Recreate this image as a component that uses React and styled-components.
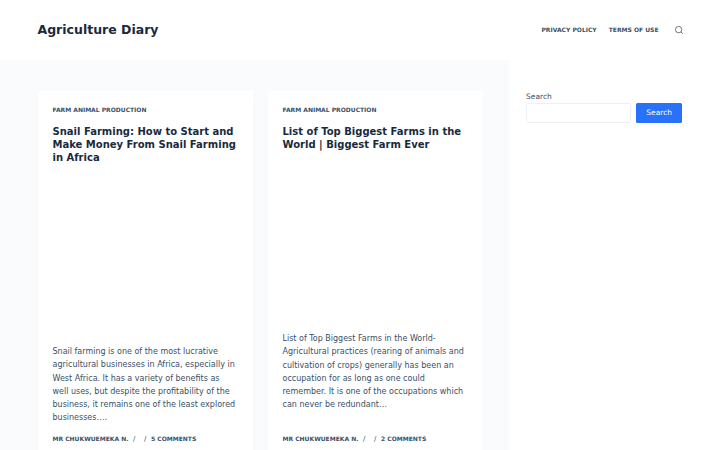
import React from 'react';
import styled, { createGlobalStyle } from 'styled-components';

const GlobalStyle = createGlobalStyle`
  * { box-sizing: border-box; }
  body {
    margin: 0;
    overflow: hidden;
    background: #fff;
    color: #3a4f66;
    font-family: "DejaVu Sans", sans-serif;
    font-size: 8px;
    line-height: 13.2px;
  }
  a { color: inherit; text-decoration: none; }
  h1, h2, p { margin: 0; }
`;

const Page = styled.div`
  width: 720px;
  height: 450px;
  overflow: hidden;
  display: flex;
  flex-direction: column;
`;

const Header = styled.header`
  flex: 0 0 60px;
  display: flex;
  align-items: center;
  justify-content: space-between;
  padding: 0 37.5px;
`;

const SiteTitle = styled.h1`
  color: #192a3d;
  font-size: 12.5px;
  line-height: 18px;
  font-weight: 700;
`;

const Nav = styled.nav`
  display: flex;
  align-items: center;
  gap: 12px;
  color: #3a4f66;
  font-size: 6px;
  line-height: 8px;
  font-weight: 700;
  text-transform: uppercase;
`;

const NavLink = styled.a`
  padding-bottom: 1px;
`;

const SearchIcon = styled.svg`
  width: 8px;
  height: 8px;
  margin-left: 4px;
`;

const Body = styled.div`
  flex: 1;
  min-height: 0;
  display: flex;
`;

const Main = styled.main`
  flex: 0 0 508.5px;
  padding: 31px 26px 0 37.5px;
  display: grid;
  grid-template-columns: 215px 215px;
  gap: 15px;
  background: #fafbfd;
`;

const Card = styled.article`
  height: 380px;
  padding: 15px;
  background: #fff;
  box-shadow: 0 6px 9px rgba(34, 56, 101, 0.02);
`;

const Category = styled.a`
  display: block;
  height: 8px;
  font-size: 6px;
  line-height: 7px;
  font-weight: 700;
  text-transform: uppercase;
`;

const Title = styled.h2`
  height: ${(p) => p.$height}px;
  margin-top: 11px;
  color: #192a3d;
  font-size: 10px;
  line-height: 13px;
  font-weight: 700;
  white-space: pre;
`;

const Excerpt = styled.p`
  height: 79.2px;
  white-space: pre;
`;

const Meta = styled.div`
  display: flex;
  margin-top: ${(p) => p.$gap}px;
  font-size: 6px;
  line-height: 8px;
  font-weight: 700;
  text-transform: uppercase;
  white-space: pre;
`;

const Author = styled.span`
  width: 80.5px;
`;

const Slash = styled.span`
  width: ${(p) => p.$width}px;
  font-size: 7px;
  font-weight: 400;
`;

const Sidebar = styled.aside`
  flex: 1;
  min-width: 0;
  padding: 30px 37.8px 0 17.5px;
`;

const Label = styled.label`
  display: block;
  font-size: 7.5px;
`;

const SearchRow = styled.form`
  display: flex;
  gap: 5px;
`;

const Input = styled.input`
  flex: 1;
  min-width: 0;
  height: 20px;
  border: 1px solid #eceff3;
  border-radius: 1.5px;
  background: #fff;
`;

const Button = styled.button`
  width: 46px;
  height: 20px;
  padding: 0;
  border: 0;
  border-radius: 1.5px;
  background: #2872fa;
  color: #fff;
  font: 7.5px/20px "DejaVu Sans", sans-serif;
`;

const posts = [
  {
    title: 'Snail Farming: How to Start and\nMake Money From Snail Farming\nin Africa',
    titleHeight: 220.23,
    excerpt: 'Snail farming is one of the most lucrative\nagricultural businesses in Africa, especially in\nWest Africa. It has a variety of benefits as\nwell uses, but despite the profitability of the\nbusiness, it remains one of the least explored\nbusinesses….',
    gap: 10.27,
    comments: '5 Comments',
  },
  {
    title: 'List of Top Biggest Farms in the\nWorld | Biggest Farm Ever',
    titleHeight: 207.23,
    excerpt: 'List of Top Biggest Farms in the World-\nAgricultural practices (rearing of animals and\ncultivation of crops) generally has been an\noccupation for as long as one could\nremember. It is one of the occupations which\ncan never be redundant…',
    gap: 23.27,
    comments: '2 Comments',
  },
];

export default function App() {
  return (
    <Page>
      <GlobalStyle />
      <Header>
        <SiteTitle>Agriculture Diary</SiteTitle>
        <Nav>
          <NavLink href="#privacy">Privacy Policy</NavLink>
          <NavLink href="#terms">Terms of Use</NavLink>
          <SearchIcon viewBox="0 0 16 16" fill="none" stroke="#3a4f66" strokeWidth="1.5">
            <circle cx="7.2" cy="7.2" r="6.4" />
            <path d="M11.8 11.8 15.5 15.5" />
          </SearchIcon>
        </Nav>
      </Header>
      <Body>
        <Main>
          {posts.map((post) => (
            <Card key={post.comments}>
              <Category href="#category">Farm Animal Production</Category>
              <Title $height={post.titleHeight}>{post.title}</Title>
              <Excerpt>{post.excerpt}</Excerpt>
              <Meta $gap={post.gap}>
                <Author>Mr Chukwuemeka N.</Author>
                <Slash $width={11}>/</Slash>
                <Slash $width={7}>/</Slash>
                <span>{post.comments}</span>
              </Meta>
            </Card>
          ))}
        </Main>
        <Sidebar>
          <Label htmlFor="search">Search</Label>
          <SearchRow>
            <Input id="search" />
            <Button type="button">Search</Button>
          </SearchRow>
        </Sidebar>
      </Body>
    </Page>
  );
}
